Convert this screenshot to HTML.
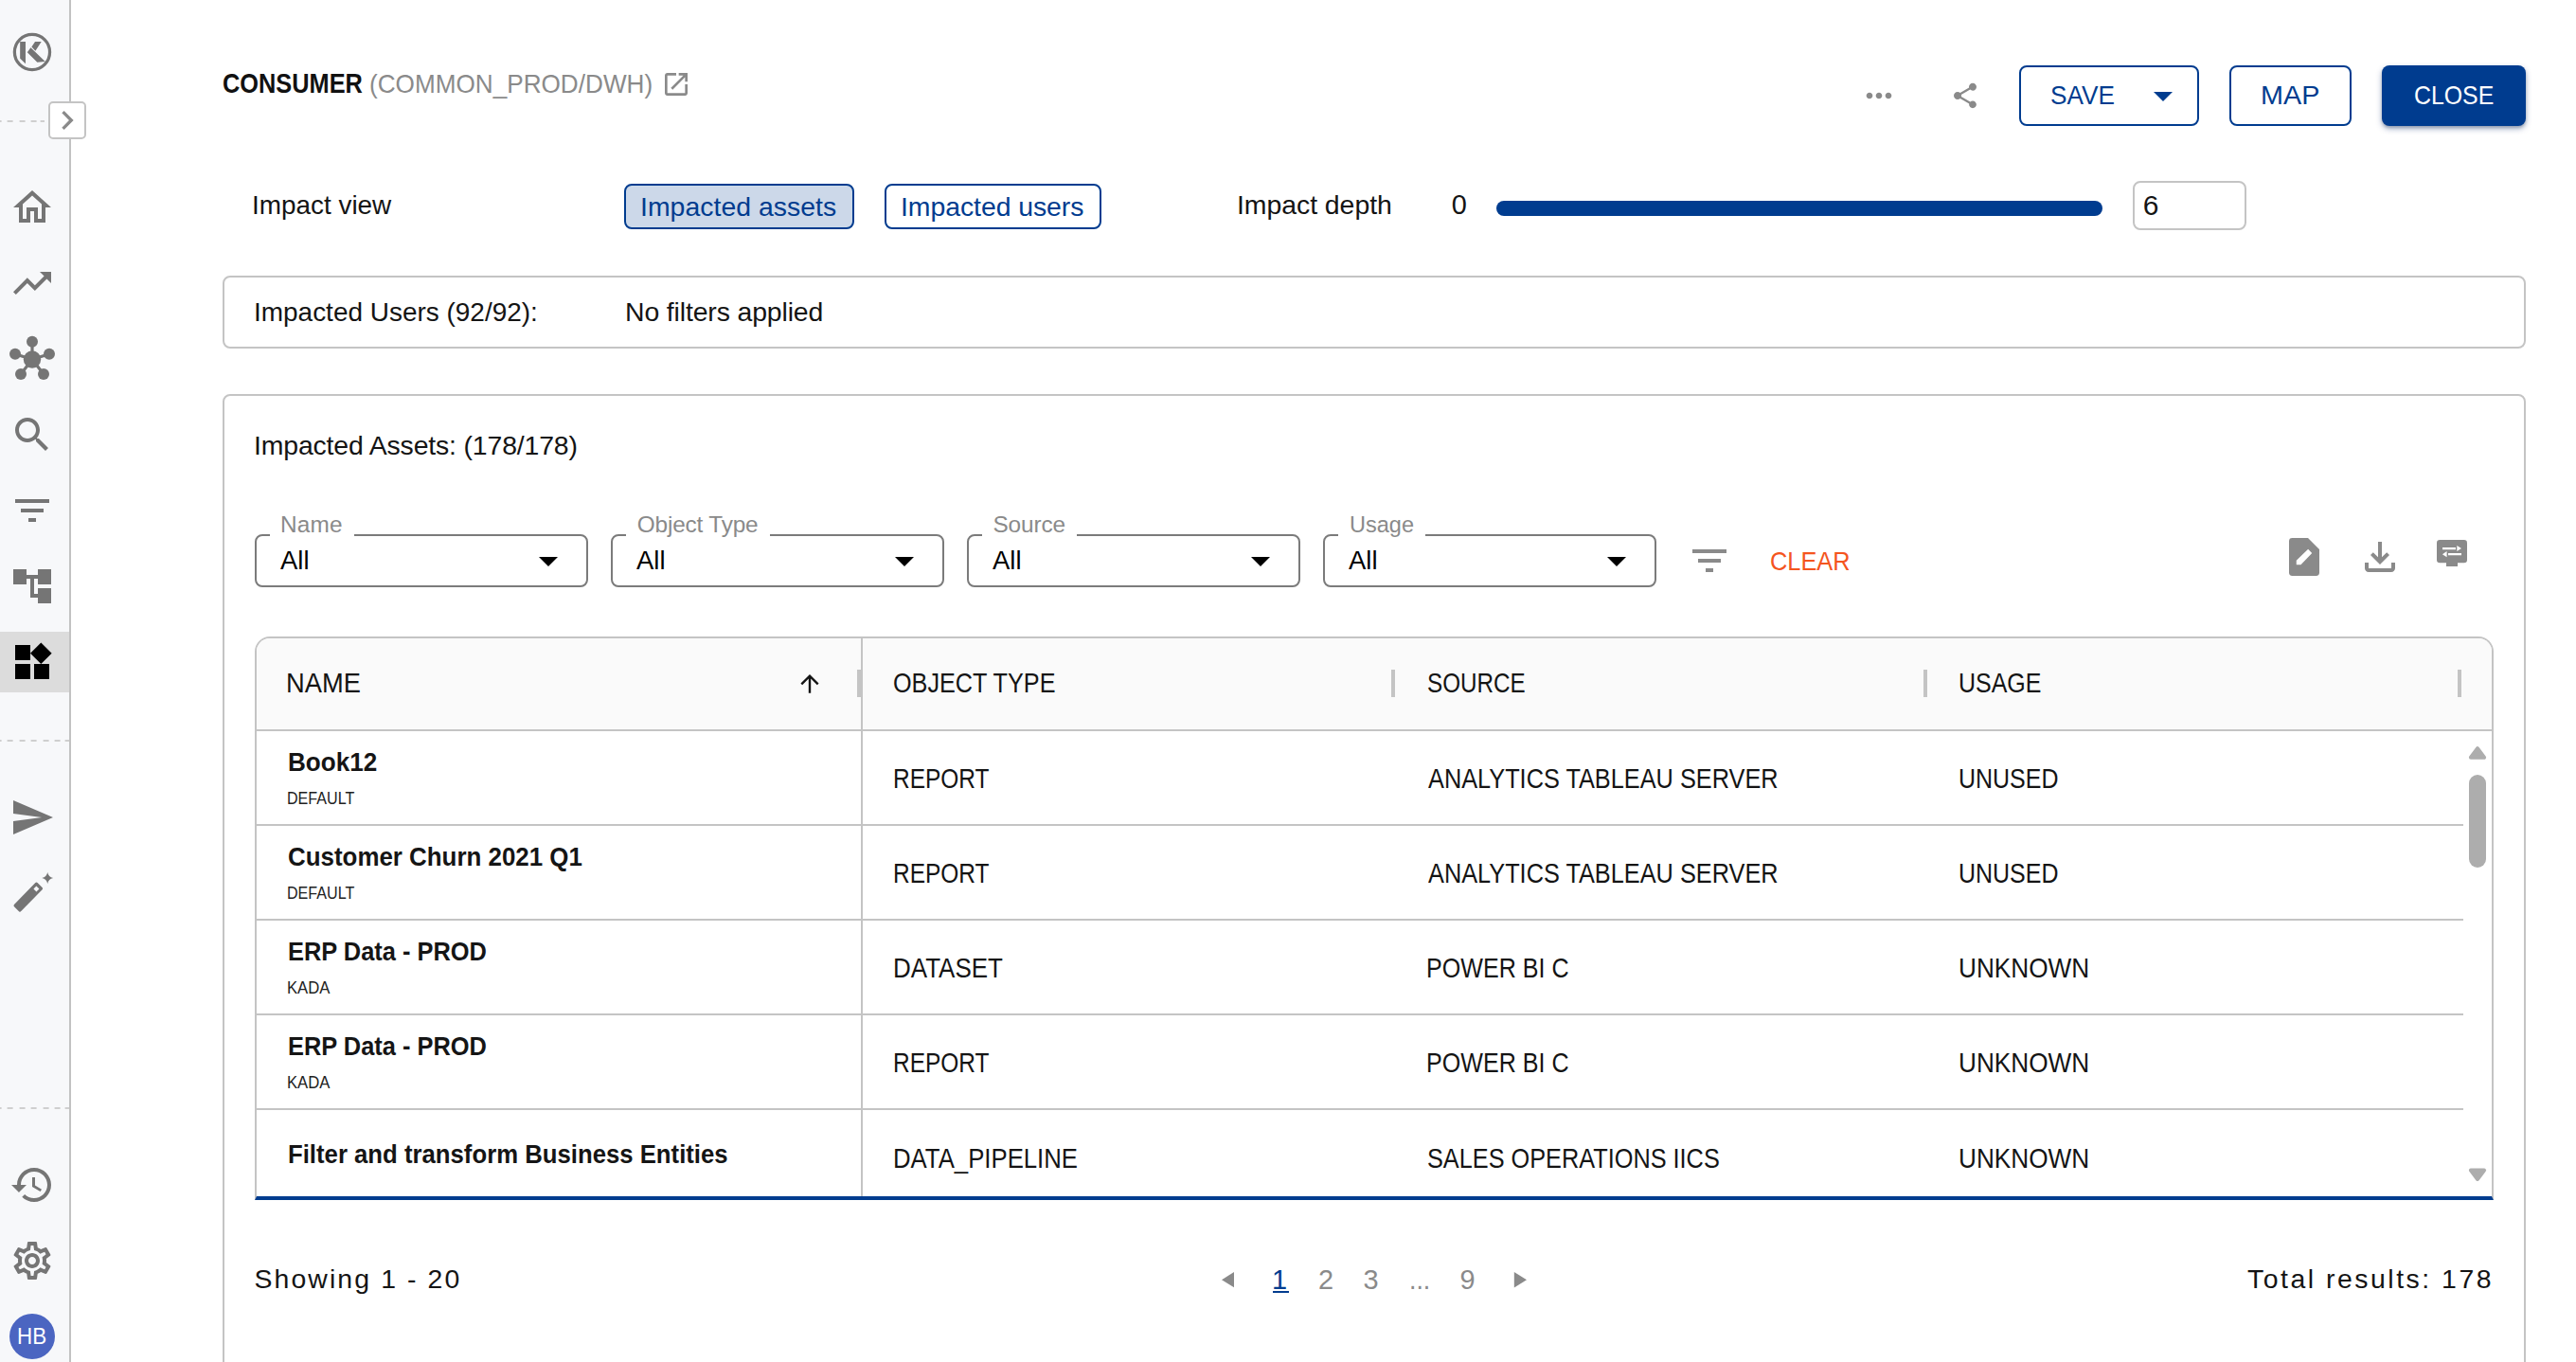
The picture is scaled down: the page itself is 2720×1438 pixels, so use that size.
<!DOCTYPE html>
<html lang="en">
<head>
<meta charset="utf-8">
<title>Impact Assessment - CONSUMER</title>
<style>
html,body{margin:0;padding:0;background:#fff;}
body{width:2720px;height:1438px;overflow:hidden;position:relative;font-family:"Liberation Sans",sans-serif;color:#141414;}
*{box-sizing:border-box;}
.a{position:absolute;}
.t{position:absolute;white-space:pre;font-size:28px;transform-origin:0 0;}
svg{position:absolute;display:block;overflow:visible;}
.ic{fill:#757575;}
/* sidebar */
#side{left:0;top:0;width:75px;height:1438px;background:#f7f8fa;border-right:2px solid #c2c2c2;}
.dash{left:0;width:73px;height:2px;background:repeating-linear-gradient(90deg,#cfcfcf 0 6px,transparent 6px 12.500px);background-position:-4.400px 0;}
#sel{left:0;top:667px;width:73px;height:64px;background:#dcdcdc;}
#exp{left:51px;top:107px;width:40px;height:40px;background:#fff;border:2px solid #c4c4c4;border-radius:5px;}
#avatar{left:10px;top:1387px;width:48px;height:48px;border-radius:50%;background:#4b65c1;}
/* cards */
.card{border:2px solid #c4c4c4;border-radius:8px;background:#fff;}
.btn{border:2px solid #003c8f;border-radius:8px;background:#fff;}
.sel{width:352px;height:56px;top:564px;border:2px solid #7b7b7b;border-radius:8px;}
.notch{top:562px;height:6px;background:#fff;}
.hl{background:#c4c4c4;height:2px;left:271px;width:2330px;}
.rh{background:#c4c4c4;width:4px;height:29px;top:707px;}
</style>
</head>
<body>
<!-- ============ SIDEBAR ============ -->
<div id="side" class="a"></div>
<div class="a dash" style="top:127px;width:47px"></div>
<div class="a dash" style="top:781px"></div>
<div class="a dash" style="top:1169px"></div>
<div id="sel" class="a"></div>
<!-- logo: K in a circle -->
<svg style="left:10px;top:31px" width="48" height="48" viewBox="10 31 48 48"><circle cx="33.960" cy="54.960" r="18.600" fill="none" stroke="#757575" stroke-width="3.250"/><path fill="#757575" d="M21.170 44.080H26.980V67.180L21.170 61.650ZM37.020 44.080H43.700L37.400 53.630 33.390 49.620ZM32.440 50.190L47.710 65.080 39.310 65.850 28.810 55.350Z"/></svg>
<!-- home -->
<svg class="ic" style="left:10px;top:195px" width="48" height="48" viewBox="0 0 24 24"><path d="M12 5.69l5 4.5V18h-2v-6H9v6H7v-7.81l5-4.5M12 3L2 12h3v8h6v-6h2v6h6v-8h3L12 3z"/></svg>
<!-- trending up -->
<svg class="ic" style="left:10px;top:275px" width="48" height="48" viewBox="0 0 24 24"><path d="M16 6l2.29 2.29-4.88 4.88-4-4L2 16.59 3.41 18l6-6 4 4 6.3-6.29L22 12V6z"/></svg>
<!-- hub -->
<svg style="left:10px;top:355px" width="48" height="48" viewBox="10 355 48 48"><g stroke="#757575" stroke-width="3.2" fill="none"><path d="M34 379.5V361M34 379.5L16 373.8M34 379.5L52 373.8M34 379.5L22 395M34 379.5L46 395"/></g><g fill="#757575"><circle cx="34" cy="379.5" r="9.2"/><circle cx="34" cy="360.8" r="6"/><circle cx="16" cy="373.8" r="6"/><circle cx="52" cy="373.8" r="6"/><circle cx="22" cy="395" r="6"/><circle cx="46" cy="395" r="6"/></g></svg>
<!-- search -->
<svg class="ic" style="left:10px;top:435px" width="48" height="48" viewBox="0 0 24 24"><path d="M15.5 14h-.79l-.28-.27C15.41 12.59 16 11.11 16 9.5 16 5.91 13.09 3 9.5 3S3 5.91 3 9.5 5.91 16 9.5 16c1.61 0 3.09-.59 4.23-1.57l.27.28v.79l5 4.99L20.49 19l-4.99-5zm-6 0C7.01 14 5 11.99 5 9.5S7.01 5 9.5 5 14 7.01 14 9.5 11.99 14 9.5 14z"/></svg>
<!-- filter list -->
<svg class="ic" style="left:10px;top:515px" width="48" height="48" viewBox="0 0 24 24"><path d="M10 18h4v-2h-4v2zM3 6v2h18V6H3zm3 7h12v-2H6v2z"/></svg>
<!-- account tree -->
<svg class="ic" style="left:10px;top:595px" width="48" height="48" viewBox="0 0 24 24"><path d="M22 11V3h-7v3H9V3H2v8h7V8h2v10h4v3h7v-8h-7v3h-2V8h2v3z"/></svg>
<!-- widgets (selected) -->
<svg style="left:10px;top:675px;fill:#000" width="48" height="48" viewBox="0 0 24 24"><path d="M13 13v8h8v-8h-8zM3 21h8v-8H3v8zM3 3v8h8V3H3zm13.66-1.31L11 7.34 16.66 13l5.66-5.66-5.66-5.65z"/></svg>
<!-- send -->
<svg class="ic" style="left:10px;top:839px" width="48" height="48" viewBox="0 0 24 24"><path d="M2.01 21L23 12 2.01 3 2 10l15 2-15 2z"/></svg>
<!-- magic wand -->
<svg style="left:10px;top:919px" width="48" height="48" viewBox="10 919 48 48"><g fill="#757575"><rect x="-5.100" y="-17.600" width="10.200" height="35.200" rx="1.600" transform="translate(29.800 947.100) rotate(44.300)"/><path d="M50.200 921q.95 5.050 5.900 6-4.950.95-5.900 6.100-.95-5.150-5.900-6.100 4.950-.95 5.900-6z"/></g><rect x="-2.100" y="-2.100" width="4.200" height="4.200" fill="#f7f8fa" transform="translate(38.400 938.500) rotate(44.300)"/></svg>
<!-- history -->
<svg class="ic" style="left:10px;top:1227px" width="48" height="48" viewBox="0 0 24 24"><path d="M13 3c-4.970 0-9 4.030-9 9H1l3.890 3.890.07.14L9 12H6c0-3.870 3.130-7 7-7s7 3.130 7 7-3.130 7-7 7c-1.930 0-3.680-.79-4.940-2.060l-1.420 1.420C8.270 19.990 10.510 21 13 21c4.970 0 9-4.030 9-9s-4.030-9-9-9zm-1 5v5l4.280 2.540.72-1.210-3.500-2.080V8H12z"/></svg>
<!-- settings -->
<svg class="ic" style="left:10px;top:1307px" width="48" height="48" viewBox="0 0 24 24"><path d="M19.430 12.980c.04-.32.07-.64.07-.98 0-.34-.03-.66-.07-.98l2.110-1.650c.19-.15.24-.42.12-.64l-2-3.460c-.09-.16-.26-.25-.44-.25-.06 0-.12.010-.17.030l-2.490 1c-.52-.4-1.080-.73-1.690-.98l-.38-2.650C14.460 2.180 14.250 2 14 2h-4c-.25 0-.46.180-.49.420l-.38 2.650c-.61.250-1.170.59-1.690.98l-2.490-1c-.06-.02-.12-.03-.18-.03-.17 0-.34.090-.43.250l-2 3.460c-.13.220-.07.49.12.640l2.110 1.650c-.04.320-.07.650-.07.980 0 .33.030.66.070.98l-2.110 1.650c-.19.150-.24.420-.12.640l2 3.460c.09.160.26.250.44.250.06 0 .12-.01.17-.03l2.490-1c.52.4 1.080.73 1.690.98l.38 2.650c.03.240.24.420.49.420h4c.25 0 .46-.18.49-.42l.38-2.650c.61-.25 1.170-.59 1.690-.98l2.490 1c.06.020.12.030.18.030.17 0 .34-.09.43-.25l2-3.460c.12-.22.07-.49-.12-.64l-2.110-1.650zm-1.980-1.710c.04.310.05.520.05.730 0 .21-.02.430-.05.730l-.14 1.130.89.700 1.080.84-.7 1.210-1.270-.51-1.040-.42-.9.680c-.43.320-.84.560-1.250.73l-1.060.43-.16 1.130-.2 1.350h-1.400l-.19-1.350-.16-1.130-1.060-.43c-.43-.18-.83-.41-1.230-.71l-.91-.7-1.060.43-1.270.51-.7-1.210 1.080-.84.890-.7-.14-1.130c-.03-.31-.05-.54-.05-.74s.02-.43.050-.73l.14-1.130-.89-.7-1.080-.84.700-1.210 1.270.51 1.040.42.900-.68c.43-.32.840-.56 1.250-.73l1.060-.43.160-1.130.2-1.350h1.390l.19 1.350.16 1.130 1.060.43c.43.180.83.410 1.230.71l.91.70 1.060-.43 1.270-.51.700 1.210-1.070.85-.89.70.14 1.130zM12 8c-2.210 0-4 1.790-4 4s1.790 4 4 4 4-1.790 4-4-1.790-4-4-4zm0 6c-1.100 0-2-.9-2-2s.9-2 2-2 2 .9 2 2-.9 2-2 2z"/></svg>
<div id="exp" class="a"></div>
<svg class="ic" style="left:51px;top:107px;fill:#8a8a8a" width="40" height="40" viewBox="0 0 24 24"><path d="M8.59 16.59L13.17 12 8.59 7.41 10 6l6 6-6 6-1.41-1.41z"/></svg>
<div id="avatar" class="a"></div>

<!-- ============ HEADER ============ -->
<!-- open in new -->
<svg style="left:698px;top:73px;fill:#8a8a8a" width="32" height="32" viewBox="0 0 24 24"><path d="M19 19H5V5h7V3H5c-1.110 0-2 .9-2 2v14c0 1.100.89 2 2 2h14c1.100 0 2-.9 2-2v-7h-2v7zM14 3v2h3.590l-9.830 9.830 1.410 1.410L19 6.410V10h2V3h-7z"/></svg>
<!-- more -->
<svg style="left:1963.500px;top:80.750px;fill:#8a8a8a" width="40" height="40" viewBox="0 0 24 24"><path d="M6 10c-1.100 0-2 .9-2 2s.9 2 2 2 2-.9 2-2-.9-2-2-2zm12 0c-1.100 0-2 .9-2 2s.9 2 2 2 2-.9 2-2-.9-2-2-2zm-6 0c-1.100 0-2 .9-2 2s.9 2 2 2 2-.9 2-2-.9-2-2-2z"/></svg>
<!-- share -->
<svg style="left:2058.500px;top:84.800px;fill:#8a8a8a" width="32" height="32" viewBox="0 0 24 24"><path d="M18 16.080c-.76 0-1.440.3-1.960.77L8.910 12.700c.05-.23.09-.46.09-.7s-.04-.47-.09-.7l7.050-4.110c.54.5 1.250.81 2.040.81 1.660 0 3-1.340 3-3s-1.340-3-3-3-3 1.340-3 3c0 .24.04.47.09.7L8.040 9.810C7.500 9.310 6.790 9 6 9c-1.660 0-3 1.340-3 3s1.340 3 3 3c.79 0 1.500-.31 2.040-.81l7.120 4.160c-.05.21-.08.43-.08.65 0 1.610 1.310 2.920 2.920 2.920 1.610 0 2.920-1.310 2.920-2.920s-1.310-2.920-2.920-2.920z"/></svg>
<!-- SAVE / MAP / CLOSE -->
<div class="a btn" style="left:2132px;top:69px;width:190px;height:64px"></div>
<svg style="left:2260px;top:77px;fill:#003c8f" width="48" height="48" viewBox="0 0 24 24"><path d="M7 10l5 5 5-5z"/></svg>
<div class="a btn" style="left:2354px;top:69px;width:129px;height:64px"></div>
<div class="a" style="left:2515px;top:69px;width:152px;height:64px;border-radius:8px;background:#003c8f;box-shadow:0 3px 6px rgba(0,40,110,.35),0 2px 3px rgba(0,0,0,.18)"></div>
<!-- impact view toggle -->
<div class="a btn" style="left:659px;top:194px;width:243px;height:48px;background:#ccd8e9"></div>
<div class="a btn" style="left:934px;top:194px;width:229px;height:48px"></div>
<!-- slider + depth input -->
<div class="a" style="left:1580px;top:212px;width:640px;height:16px;border-radius:8px;background:#003c8f"></div>
<div class="a card" style="left:2252px;top:191px;width:120px;height:52px"></div>

<!-- ============ CARDS ============ -->
<!-- impacted users -->
<div class="a card" style="left:235px;top:291px;width:2432px;height:77px"></div>
<!-- impacted assets -->
<div class="a card" style="left:235px;top:416px;width:2432px;height:1100px"></div>
<!-- selects -->
<div class="a sel" style="left:269px"></div><div class="a notch" style="left:285px;width:89px"></div>
<div class="a sel" style="left:645px"></div><div class="a notch" style="left:661px;width:152px"></div>
<div class="a sel" style="left:1021px"></div><div class="a notch" style="left:1037px;width:100px"></div>
<div class="a sel" style="left:1397px"></div><div class="a notch" style="left:1413px;width:92px"></div>
<svg style="left:555px;top:568px" width="48" height="48" viewBox="0 0 24 24"><path d="M7 10l5 5 5-5z"/></svg>
<svg style="left:931px;top:568px" width="48" height="48" viewBox="0 0 24 24"><path d="M7 10l5 5 5-5z"/></svg>
<svg style="left:1307px;top:568px" width="48" height="48" viewBox="0 0 24 24"><path d="M7 10l5 5 5-5z"/></svg>
<svg style="left:1683px;top:568px" width="48" height="48" viewBox="0 0 24 24"><path d="M7 10l5 5 5-5z"/></svg>
<!-- filter icon -->
<svg style="left:1781px;top:568px;fill:#8a8a8a" width="48" height="48" viewBox="0 0 24 24"><path d="M10 18h4v-2h-4v2zM3 6v2h18V6H3zm3 7h12v-2H6v2z"/></svg>
<!-- toolbar icons -->
<svg style="left:2409px;top:564px;fill:#8a8a8a" width="48" height="48" viewBox="0 0 24 24"><path fill-rule="evenodd" d="M5.700 2H14l6 6v12.300a1.700 1.700 0 0 1-1.700 1.700H5.700A1.700 1.700 0 0 1 4 20.300V3.700A1.700 1.700 0 0 1 5.700 2zM14.070 7.880L16.120 10 10.230 16.080H7.880V13.850z"/></svg>
<svg style="left:2489px;top:564px;fill:#8a8a8a" width="48" height="48" viewBox="0 0 24 24"><path d="M18 15v3H6v-3H4v3c0 1.100.9 2 2 2h12c1.100 0 2-.9 2-2v-3h-2zm-1-4l-1.410-1.410L13 12.170V4h-2v8.170L8.410 9.590 7 11l5 5 5-5z"/></svg>
<svg style="left:2565px;top:560px" width="48" height="48" viewBox="2565 560 48 48"><rect x="2573" y="570" width="32" height="24.200" rx="3.200" fill="#8a8a8a"/><rect x="2583" y="594" width="12" height="4" fill="#8a8a8a"/><path fill="#fff" d="M2579 577.900h14v2.300h-14zM2594.300 576v6l4.700-3zM2585 584h14v2.300h-14zM2583.600 582v6.300l-4.700-3.150z"/></svg>
<!-- table -->
<div class="a" style="left:269px;top:672px;width:2364px;height:595px;border:2px solid #c4c4c4;border-bottom:4px solid #003c8f;border-radius:16px 16px 0 0;background:#fff;overflow:hidden"><div style="height:96px;background:#fafafa"></div></div>
<div class="a hl" style="top:770px;width:2360px"></div>
<div class="a hl" style="top:870px"></div>
<div class="a hl" style="top:970px"></div>
<div class="a hl" style="top:1070px"></div>
<div class="a hl" style="top:1170px"></div>
<div class="a" style="left:909px;top:674px;width:2px;height:589px;background:#c4c4c4"></div>
<div class="a rh" style="left:905px"></div>
<div class="a rh" style="left:1469px"></div>
<div class="a rh" style="left:2031px"></div>
<div class="a rh" style="left:2595px"></div>
<!-- sort arrow -->
<svg style="left:843px;top:710px" width="24" height="24" viewBox="843 710 24 24"><path d="M855 731.800V714M846.300 722.300L855 713.700l8.700 8.600" fill="none" stroke="#141414" stroke-width="2.400"/></svg>
<!-- scrollbar -->
<svg style="left:2604px;top:786px" width="24" height="18" viewBox="2604 786 24 18"><path d="M2616 790.100l7.100 9.700h-14.200z" fill="#adadad" stroke="#adadad" stroke-width="4" stroke-linejoin="round"/></svg>
<div class="a" style="left:2607px;top:818px;width:18px;height:98px;border-radius:9px;background:#adadad"></div>
<svg style="left:2604px;top:1231px" width="24" height="18" viewBox="2604 1231 24 18"><path d="M2616 1245l7.100-9.500h-14.200z" fill="#adadad" stroke="#adadad" stroke-width="4" stroke-linejoin="round"/></svg>
<!-- pagination arrows -->
<svg style="left:1288px;top:1341px" width="18" height="20" viewBox="1288 1341 18 20"><path d="M1303 1343v16.300l-13-8.150z" fill="#8a8a8a"/></svg>
<svg style="left:1597px;top:1341px" width="18" height="20" viewBox="1597 1341 18 20"><path d="M1598.800 1343v16.600l13.200-8.300z" fill="#8a8a8a"/></svg>
<div class="a" style="left:1344px;top:1363px;width:17px;height:2px;background:#003c8f"></div>

<!-- ============ TEXT ============ -->
<span class="t" style="left:234.61px;top:70.00px;font-size:28.61px;line-height:36px;font-weight:700;color:#111;transform:scaleX(0.8861);">CONSUMER</span>
<span class="t" style="left:390.06px;top:71.00px;font-size:27.89px;line-height:35px;color:#8a8a8a;transform:scaleX(0.9378);">(COMMON_PROD/DWH)</span>
<span class="t" style="left:266.04px;top:198.25px;font-size:28.42px;line-height:36px;transform:scaleX(0.9818);">Impact view</span>
<span class="t" style="left:676.00px;top:200.00px;font-size:28.42px;line-height:36px;letter-spacing:0.026px;color:#003c8f;">Impacted assets</span>
<span class="t" style="left:951.00px;top:200.00px;font-size:28.42px;line-height:36px;letter-spacing:-0.057px;color:#003c8f;">Impacted users</span>
<span class="t" style="left:1306.00px;top:198.25px;font-size:28.42px;line-height:36px;letter-spacing:-0.039px;">Impact depth</span>
<span class="t" style="left:1532.75px;top:198.25px;font-size:28.92px;line-height:36px;">0</span>
<span class="t" style="left:2262.75px;top:198.00px;font-size:29.96px;line-height:37px;">6</span>
<span class="t" style="left:2165.03px;top:84.00px;font-size:26.86px;line-height:34px;color:#003c8f;transform:scaleX(0.9741);">SAVE</span>
<span class="t" style="left:2387.36px;top:84.00px;font-size:26.86px;line-height:34px;color:#003c8f;transform:scaleX(1.0716);">MAP</span>
<span class="t" style="left:2548.57px;top:84.00px;font-size:26.86px;line-height:34px;color:#ffffff;transform:scaleX(0.9255);">CLOSE</span>
<span class="t" style="left:268.03px;top:311.00px;font-size:28.42px;line-height:36px;transform:scaleX(0.9840);">Impacted Users (92/92):</span>
<span class="t" style="left:660.00px;top:311.00px;font-size:28.42px;line-height:36px;letter-spacing:-0.134px;">No filters applied</span>
<span class="t" style="left:268.00px;top:452.00px;font-size:28.42px;line-height:36px;letter-spacing:-0.156px;">Impacted Assets: (178/178)</span>
<span class="t" style="left:296.00px;top:539.00px;font-size:24.36px;line-height:30px;letter-spacing:0.190px;color:#8a8a8a;">Name</span>
<span class="t" style="left:672.75px;top:539.00px;font-size:24.36px;line-height:30px;letter-spacing:-0.168px;color:#8a8a8a;">Object Type</span>
<span class="t" style="left:1048.50px;top:539.00px;font-size:24.36px;line-height:30px;letter-spacing:-0.127px;color:#8a8a8a;">Source</span>
<span class="t" style="left:1424.53px;top:539.00px;font-size:24.36px;line-height:30px;color:#8a8a8a;transform:scaleX(0.9656);">Usage</span>
<span class="t" style="left:295.75px;top:573.00px;font-size:28.42px;line-height:36px;color:#000;transform:scaleX(0.9667);">All</span>
<span class="t" style="left:671.75px;top:573.00px;font-size:28.42px;line-height:36px;color:#000;transform:scaleX(0.9667);">All</span>
<span class="t" style="left:1047.75px;top:573.00px;font-size:28.42px;line-height:36px;color:#000;transform:scaleX(0.9667);">All</span>
<span class="t" style="left:1423.75px;top:573.00px;font-size:28.42px;line-height:36px;color:#000;transform:scaleX(0.9667);">All</span>
<span class="t" style="left:1869.07px;top:576.00px;font-size:27.37px;line-height:34px;color:#f4551e;transform:scaleX(0.9277);">CLEAR</span>
<span class="t" style="left:301.86px;top:703.00px;font-size:28.92px;line-height:36px;transform:scaleX(0.9448);">NAME</span>
<span class="t" style="left:943.13px;top:703.00px;font-size:28.92px;line-height:36px;transform:scaleX(0.8725);">OBJECT TYPE</span>
<span class="t" style="left:1506.66px;top:703.00px;font-size:28.92px;line-height:36px;transform:scaleX(0.8375);">SOURCE</span>
<span class="t" style="left:2068.27px;top:703.00px;font-size:28.92px;line-height:36px;transform:scaleX(0.8643);">USAGE</span>
<span class="t" style="left:303.58px;top:786.00px;font-size:28.42px;line-height:36px;font-weight:700;color:#151515;transform:scaleX(0.9175);">Book12</span>
<span class="t" style="left:303.13px;top:831.00px;font-size:18.59px;line-height:23px;color:#222;transform:scaleX(0.8660);">DEFAULT</span>
<span class="t" style="left:942.81px;top:804.00px;font-size:28.92px;line-height:36px;transform:scaleX(0.8463);">REPORT</span>
<span class="t" style="left:1507.50px;top:804.00px;font-size:28.92px;line-height:36px;transform:scaleX(0.8758);">ANALYTICS TABLEAU SERVER</span>
<span class="t" style="left:2068.27px;top:804.00px;font-size:28.92px;line-height:36px;transform:scaleX(0.8642);">UNUSED</span>
<span class="t" style="left:303.59px;top:886.00px;font-size:28.42px;line-height:36px;font-weight:700;color:#151515;transform:scaleX(0.9118);">Customer Churn 2021 Q1</span>
<span class="t" style="left:303.13px;top:931.00px;font-size:18.59px;line-height:23px;color:#222;transform:scaleX(0.8660);">DEFAULT</span>
<span class="t" style="left:942.81px;top:904.00px;font-size:28.92px;line-height:36px;transform:scaleX(0.8463);">REPORT</span>
<span class="t" style="left:1507.50px;top:904.00px;font-size:28.92px;line-height:36px;transform:scaleX(0.8758);">ANALYTICS TABLEAU SERVER</span>
<span class="t" style="left:2068.27px;top:904.00px;font-size:28.92px;line-height:36px;transform:scaleX(0.8642);">UNUSED</span>
<span class="t" style="left:303.61px;top:986.00px;font-size:28.42px;line-height:36px;font-weight:700;color:#151515;transform:scaleX(0.8944);">ERP Data - PROD</span>
<span class="t" style="left:303.10px;top:1031.00px;font-size:18.59px;line-height:23px;color:#222;transform:scaleX(0.8974);">KADA</span>
<span class="t" style="left:942.70px;top:1004.00px;font-size:28.92px;line-height:36px;transform:scaleX(0.8982);">DATASET</span>
<span class="t" style="left:1505.76px;top:1004.00px;font-size:28.92px;line-height:36px;transform:scaleX(0.8676);">POWER BI C</span>
<span class="t" style="left:2068.19px;top:1004.00px;font-size:28.92px;line-height:36px;transform:scaleX(0.9064);">UNKNOWN</span>
<span class="t" style="left:303.61px;top:1086.00px;font-size:28.42px;line-height:36px;font-weight:700;color:#151515;transform:scaleX(0.8944);">ERP Data - PROD</span>
<span class="t" style="left:303.10px;top:1131.00px;font-size:18.59px;line-height:23px;color:#222;transform:scaleX(0.8974);">KADA</span>
<span class="t" style="left:942.81px;top:1104.00px;font-size:28.92px;line-height:36px;transform:scaleX(0.8463);">REPORT</span>
<span class="t" style="left:1505.76px;top:1104.00px;font-size:28.92px;line-height:36px;transform:scaleX(0.8676);">POWER BI C</span>
<span class="t" style="left:2068.19px;top:1104.00px;font-size:28.92px;line-height:36px;transform:scaleX(0.9064);">UNKNOWN</span>
<span class="t" style="left:303.59px;top:1200.00px;font-size:28.42px;line-height:36px;font-weight:700;color:#151515;transform:scaleX(0.9057);">Filter and transform Business Entities</span>
<span class="t" style="left:942.72px;top:1204.50px;font-size:28.92px;line-height:36px;transform:scaleX(0.8905);">DATA_PIPELINE</span>
<span class="t" style="left:1506.63px;top:1204.50px;font-size:28.92px;line-height:36px;transform:scaleX(0.8750);">SALES OPERATIONS IICS</span>
<span class="t" style="left:2068.19px;top:1204.50px;font-size:28.92px;line-height:36px;transform:scaleX(0.9064);">UNKNOWN</span>
<span class="t" style="left:268.50px;top:1332.00px;font-size:28.42px;line-height:36px;letter-spacing:2.100px;">Showing 1 - 20</span>
<span class="t" style="left:1343.00px;top:1332.50px;font-size:28.92px;line-height:36px;color:#003c8f;">1</span>
<span class="t" style="left:1392.00px;top:1332.50px;font-size:28.92px;line-height:36px;color:#8a8a8a;">2</span>
<span class="t" style="left:1439.50px;top:1332.50px;font-size:28.92px;line-height:36px;color:#8a8a8a;">3</span>
<span class="t" style="left:1487.66px;top:1332.50px;font-size:28.92px;line-height:36px;color:#8a8a8a;transform:scaleX(0.9221);">...</span>
<span class="t" style="left:1541.50px;top:1332.50px;font-size:28.92px;line-height:36px;color:#8a8a8a;">9</span>
<span class="t" style="left:2373.00px;top:1332.00px;font-size:28.42px;line-height:36px;letter-spacing:2.518px;">Total results: 178</span>
<span class="t" style="left:17.98px;top:1395.00px;font-size:24.69px;line-height:31px;color:#ffffff;transform:scaleX(0.9080);">HB</span>
</body>
</html>
